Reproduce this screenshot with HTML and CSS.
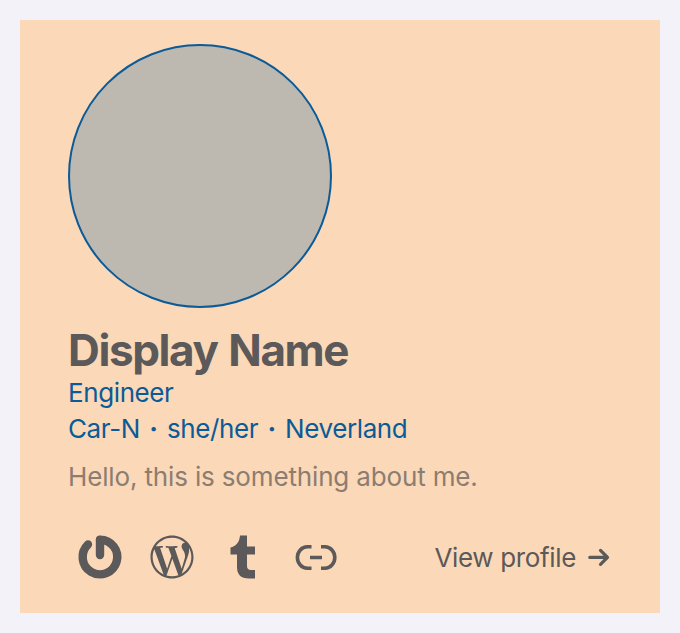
FILE: index.html
```html
<!DOCTYPE html>
<html lang="en">
<head>
<meta charset="utf-8">
<title>Profile card</title>
<link rel="stylesheet" href="styles.css">
</head>
<body>
<article class="card">
  <div class="avatar"></div>
  <h1 class="name">Display Name</h1>
  <p class="info">Engineer</p>
  <p class="info"><span>Car-N</span><span class="dot">·</span><span>she/her</span><span class="dot">·</span><span>Neverland</span></p>
  <p class="about">Hello, this is something about me.</p>
  <footer class="footer">
    <nav class="links">
      <svg class="icon" viewBox="0 0 64 64"><path d="M32 30V14.700A17.300 17.300 0 1 1 20 19.500" fill="none" stroke="currentColor" stroke-width="8.400" stroke-linecap="round" stroke-linejoin="round"/><path d="M27.800 15q0-4.300 4.200-4.300v8z" fill="currentColor"/></svg>
      <svg class="icon" viewBox="0 0 64 64"><g transform="translate(10.500 10.500) scale(1.792)"><path fill="currentColor" d="M21.469 6.825c.84 1.537 1.318 3.300 1.318 5.175 0 3.979-2.156 7.456-5.363 9.325l3.295-9.527c.615-1.540.820-2.771.820-3.864 0-.405-.026-.780-.070-1.110m-7.981.105c.647-.030 1.232-.105 1.232-.105.582-.075.514-.930-.067-.899 0 0-1.755.135-2.880.135-1.064 0-2.850-.150-2.850-.150-.585-.030-.661.855-.075.885 0 0 .540.061 1.125.090l1.680 4.605-2.370 7.080L5.354 6.900c.649-.030 1.234-.100 1.234-.100.585-.075.516-.930-.065-.896 0 0-1.746.138-2.874.138-.200 0-.438-.008-.690-.015C4.911 3.150 8.235 1.215 12 1.215c2.809 0 5.365 1.072 7.286 2.833-.046-.003-.091-.009-.141-.009-1.060 0-1.812.923-1.812 1.914 0 .890.513 1.643 1.060 2.531.411.720.890 1.643.890 2.977 0 .915-.354 1.994-.821 3.479l-1.075 3.585-3.900-11.610zM12 22.784c-1.059 0-2.081-.153-3.048-.437l3.237-9.406 3.315 9.087c.024.053.050.101.078.149-1.120.393-2.325.609-3.582.609M1.211 12c0-1.564.336-3.050.935-4.390L7.290 21.709C3.694 19.960 1.212 16.271 1.211 12M12 0C5.385 0 0 5.385 0 12s5.385 12 12 12 12-5.385 12-12S18.615 0 12 0"/></g></svg>
      <svg class="icon" viewBox="0 0 64 64"><path fill="currentColor" d="M28 10.500h7v11h8v8h-8V41q0 4 4 4h4v8.500h-6Q25 53.500 25 42V29.500h-6.500V22.500C24 21.500 27.500 17 28 10.500z"/></svg>
      <svg class="icon" viewBox="0 0 64 64"><path d="M27.500 21.800h-4.300a9.800 10.700 0 0 0 0 21.400h4.300M37 21.800h4a9.800 10.700 0 0 1 0 21.400H37M26 32.500h12" fill="none" stroke="currentColor" stroke-width="3.600"/></svg>
    </nav>
    <a class="view"><span>View profile</span><svg class="arrow" viewBox="0 0 24 24"><path d="M1.800 12.400h17M12.500 5.400l7 7-7 7" fill="none" stroke="currentColor" stroke-width="3.200" stroke-linecap="round" stroke-linejoin="round"/></svg></a>
  </footer>
</article>
</body>
</html>
```
FILE: styles.css
```css
* { box-sizing: border-box; }
body { margin: 0; padding: 20px; background: #f3f2f8; font-family: Inter, sans-serif; color: #5b5959; }
.card { height: 593px; padding: 24px 48px; background: #fbd8b7; }
.avatar { width: 264px; height: 264px; border: 2px solid #0a5b98; border-radius: 50%; background: #bdb8b0; }
.name { margin: 18px 0 0; font-size: 44px; line-height: 49px; font-weight: 700; letter-spacing: -1.400px; word-spacing: 1.800px; }
.info { display: flex; margin: 0; color: #0a5b98; font-size: 26px; line-height: 36px; letter-spacing: -0.400px; }
.dot { width: 27px; text-align: center; font-weight: 700; }
.about { margin: 12px 0 0; color: #8c7d72; font-size: 26px; line-height: 36px; letter-spacing: -0.150px; }
.footer { display: flex; justify-content: space-between; align-items: center; margin-top: 30px; height: 64px; }
.links { display: flex; gap: 8px; }
.icon { width: 64px; height: 64px; }
.view { display: flex; align-items: center; gap: 12px; font-size: 26px; letter-spacing: -0.350px; }
.arrow { width: 24px; height: 24px; }
```
